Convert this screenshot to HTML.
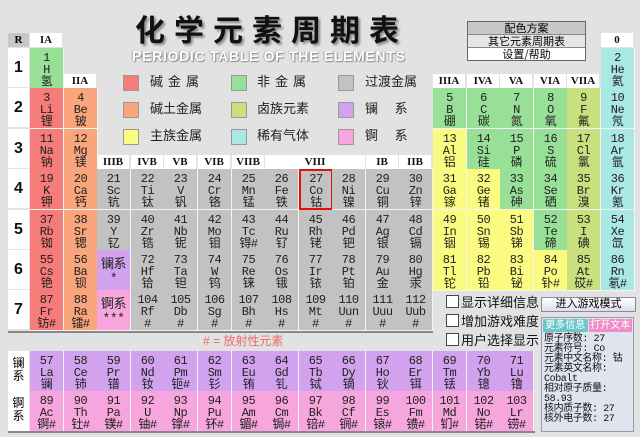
<!DOCTYPE html><html><head><meta charset="utf-8"><style>
body{margin:0;width:640px;height:437px;background:#e2e2e2;position:relative;overflow:hidden;font-family:"Liberation Sans","Noto Sans CJK SC",sans-serif}
i{font-style:normal;position:absolute;box-sizing:border-box;width:34px;height:41px;border-right:1px solid #f4f4f4;border-bottom:1px solid #f4f4f4;text-align:center;font-family:"Liberation Mono","Noto Sans CJK SC",monospace;font-size:12px;line-height:12px;padding-top:4px;color:#222;white-space:nowrap;letter-spacing:-.5px}
.a{background:#f57c78}.b{background:#f9a67c}.t{background:#c2c2c2}.m{background:#fbfb82}.n{background:#98e098}.h{background:#c8e07e}.g{background:#aae8e6}.l{background:#d2a2ee}.c{background:#f6a6dc}
.r1{top:48px}.r2{top:88px}.r3{top:129px}.r4{top:169px}.r5{top:210px}.r6{top:250px}.r7{top:290px}.rl{top:351px}.ra{top:391px}
.k1{left:30px}.k2{left:64px}.k3{left:97px}.k4{left:131px}.k5{left:164px}.k6{left:198px}.k7{left:232px}.k8{left:265px}.k9{left:299px}.k10{left:332px}.k11{left:366px}.k12{left:399px}.k13{left:433px}.k14{left:467px}.k15{left:500px}.k16{left:534px}.k17{left:567px}.k18{left:601px}
.gh{position:absolute;height:14px;background:#fff;text-align:center;font-family:"Liberation Serif",serif;font-weight:bold;font-size:11px;line-height:14px;color:#111;width:32px}
.rn{position:absolute;left:8px;width:21px;height:39px;background:#fff;font-weight:bold;font-size:16px;text-align:center;line-height:39px;color:#111}
.sw{position:absolute;width:14px;height:14px;border:1px solid #999}
.lt{position:absolute;font-size:13px;color:#222;line-height:16px}
.cb{position:absolute;left:446px;font-size:13px;color:#111;line-height:16px}
.cb b{display:inline-block;width:11px;height:11px;border:1px solid #445;background:#fff;margin-right:2px;vertical-align:-1px}
</style></head><body>
<div style="position:absolute;left:135px;top:10px;font-size:30px;font-weight:bold;letter-spacing:9px;color:#111;text-shadow:2px 2px 2px #888;font-family:'Noto Sans CJK SC',sans-serif;line-height:36px">化学元素周期表</div>
<div style="position:absolute;left:132px;top:48px;font-size:14px;font-weight:bold;color:#fff;text-shadow:1px 1px 1px #888,-1px 0 1px #aaa;letter-spacing:0.7px;line-height:16px">PERIODIC TABLE OF THE ELEMENTS</div>
<div style="position:absolute;left:467px;top:21px;width:117px;border:1px solid #666;font-size:11px;text-align:center;line-height:12px;font-family:'Noto Sans CJK SC',sans-serif">
<div style="background:#c8c8c8;border-bottom:1px solid #888">配色方案</div><div style="background:#e6e6e6;border-bottom:1px solid #888">其它元素周期表</div><div style="background:#fff">设置/帮助</div></div>
<div style="position:absolute;left:8px;top:33px;width:21px;height:14px;background:#c8c8c8;font-family:'Liberation Serif';font-weight:bold;font-size:11px;text-align:center;line-height:14px">R</div>
<div class="rn" style="top:48px">1</div><div class="rn" style="top:88px">2</div><div class="rn" style="top:129px">3</div><div class="rn" style="top:169px">4</div><div class="rn" style="top:210px">5</div><div class="rn" style="top:250px">6</div><div class="rn" style="top:290px">7</div>
<div class="gh" style="left:30px;top:33px">IA</div><div class="gh" style="left:64px;top:74px">IIA</div>
<div class="gh" style="left:97px;top:155px">IIIB</div><div class="gh" style="left:131px;top:155px">IVB</div><div class="gh" style="left:164px;top:155px">VB</div><div class="gh" style="left:198px;top:155px">VIB</div><div class="gh" style="left:232px;top:155px">VIIB</div><div class="gh" style="left:265px;top:155px;width:100px">VIII</div><div class="gh" style="left:366px;top:155px">IB</div><div class="gh" style="left:399px;top:155px">IIB</div>
<div class="gh" style="left:433px;top:74px">IIIA</div><div class="gh" style="left:467px;top:74px">IVA</div><div class="gh" style="left:500px;top:74px">VA</div><div class="gh" style="left:534px;top:74px">VIA</div><div class="gh" style="left:567px;top:74px">VIIA</div><div class="gh" style="left:601px;top:33px">0</div>
<div class="sw a" style="left:123px;top:75px"></div><div class="lt" style="left:150px;top:74px;letter-spacing:5px">碱金属</div>
<div class="sw b" style="left:123px;top:102px"></div><div class="lt" style="left:150px;top:101px">碱土金属</div>
<div class="sw m" style="left:123px;top:129px"></div><div class="lt" style="left:150px;top:128px">主族金属</div>
<div class="sw n" style="left:231px;top:75px"></div><div class="lt" style="left:257px;top:74px;letter-spacing:5px">非金属</div>
<div class="sw h" style="left:231px;top:102px"></div><div class="lt" style="left:257px;top:101px">卤族元素</div>
<div class="sw g" style="left:231px;top:129px"></div><div class="lt" style="left:257px;top:128px">稀有气体</div>
<div class="sw t" style="left:338px;top:75px"></div><div class="lt" style="left:365px;top:74px">过渡金属</div>
<div class="sw l" style="left:338px;top:102px"></div><div class="lt" style="left:365px;top:101px">镧&emsp;&nbsp;系</div>
<div class="sw c" style="left:338px;top:129px"></div><div class="lt" style="left:365px;top:128px">锕&emsp;&nbsp;系</div>

<i class="n r1 k1">1<br>H<br>氢</i><i class="g r1 k18">2<br>He<br>氦</i>
<i class="a r2 k1">3<br>Li<br>锂</i><i class="b r2 k2">4<br>Be<br>铍</i><i class="n r2 k13">5<br>B<br>硼</i><i class="n r2 k14">6<br>C<br>碳</i><i class="n r2 k15">7<br>N<br>氮</i><i class="n r2 k16">8<br>O<br>氧</i><i class="h r2 k17">9<br>F<br>氟</i><i class="g r2 k18">10<br>Ne<br>氖</i>
<i class="a r3 k1">11<br>Na<br>钠</i><i class="b r3 k2">12<br>Mg<br>镁</i><i class="m r3 k13">13<br>Al<br>铝</i><i class="n r3 k14">14<br>Si<br>硅</i><i class="n r3 k15">15<br>P<br>磷</i><i class="n r3 k16">16<br>S<br>硫</i><i class="h r3 k17">17<br>Cl<br>氯</i><i class="g r3 k18">18<br>Ar<br>氩</i>
<i class="a r4 k1">19<br>K<br>钾</i><i class="b r4 k2">20<br>Ca<br>钙</i><i class="t r4 k3">21<br>Sc<br>钪</i><i class="t r4 k4">22<br>Ti<br>钛</i><i class="t r4 k5">23<br>V<br>钒</i><i class="t r4 k6">24<br>Cr<br>铬</i><i class="t r4 k7">25<br>Mn<br>锰</i><i class="t r4 k8">26<br>Fe<br>铁</i><i class="t r4 k9" style="border:2px solid #e01010;padding-top:2px">27<br>Co<br>钴</i><i class="t r4 k10">28<br>Ni<br>镍</i><i class="t r4 k11">29<br>Cu<br>铜</i><i class="t r4 k12">30<br>Zn<br>锌</i><i class="m r4 k13">31<br>Ga<br>镓</i><i class="m r4 k14">32<br>Ge<br>锗</i><i class="n r4 k15">33<br>As<br>砷</i><i class="n r4 k16">34<br>Se<br>硒</i><i class="h r4 k17">35<br>Br<br>溴</i><i class="g r4 k18">36<br>Kr<br>氪</i>
<i class="a r5 k1">37<br>Rb<br>铷</i><i class="b r5 k2">38<br>Sr<br>锶</i><i class="t r5 k3">39<br>Y<br>钇</i><i class="t r5 k4">40<br>Zr<br>锆</i><i class="t r5 k5">41<br>Nb<br>铌</i><i class="t r5 k6">42<br>Mo<br>钼</i><i class="t r5 k7">43<br>Tc<br>锝#</i><i class="t r5 k8">44<br>Ru<br>钌</i><i class="t r5 k9">45<br>Rh<br>铑</i><i class="t r5 k10">46<br>Pd<br>钯</i><i class="t r5 k11">47<br>Ag<br>银</i><i class="t r5 k12">48<br>Cd<br>镉</i><i class="m r5 k13">49<br>In<br>铟</i><i class="m r5 k14">50<br>Sn<br>锡</i><i class="m r5 k15">51<br>Sb<br>锑</i><i class="n r5 k16">52<br>Te<br>碲</i><i class="h r5 k17">53<br>I<br>碘</i><i class="g r5 k18">54<br>Xe<br>氙</i>
<i class="a r6 k1">55<br>Cs<br>铯</i><i class="b r6 k2">56<br>Ba<br>钡</i><i class="l r6 k3" style="padding-top:8px;font-size:13px;line-height:14px">镧系<br>*</i><i class="t r6 k4">72<br>Hf<br>铪</i><i class="t r6 k5">73<br>Ta<br>钽</i><i class="t r6 k6">74<br>W<br>钨</i><i class="t r6 k7">75<br>Re<br>铼</i><i class="t r6 k8">76<br>Os<br>锇</i><i class="t r6 k9">77<br>Ir<br>铱</i><i class="t r6 k10">78<br>Pt<br>铂</i><i class="t r6 k11">79<br>Au<br>金</i><i class="t r6 k12">80<br>Hg<br>汞</i><i class="m r6 k13">81<br>Tl<br>铊</i><i class="m r6 k14">82<br>Pb<br>铅</i><i class="m r6 k15">83<br>Bi<br>铋</i><i class="m r6 k16">84<br>Po<br>钋#</i><i class="h r6 k17">85<br>At<br>砹#</i><i class="g r6 k18">86<br>Rn<br>氡#</i>
<i class="a r7 k1">87<br>Fr<br>钫#</i><i class="b r7 k2">88<br>Ra<br>镭#</i><i class="c r7 k3" style="padding-top:8px;font-size:13px;line-height:14px">锕系<br>***</i><i class="t r7 k4">104<br>Rf<br>#</i><i class="t r7 k5">105<br>Db<br>#</i><i class="t r7 k6">106<br>Sg<br>#</i><i class="t r7 k7">107<br>Bh<br>#</i><i class="t r7 k8">108<br>Hs<br>#</i><i class="t r7 k9">109<br>Mt<br>#</i><i class="t r7 k10">110<br>Uun<br>#</i><i class="t r7 k11">111<br>Uuu<br>#</i><i class="t r7 k12">112<br>Uub<br>#</i>
<div style="position:absolute;left:8px;top:331px;width:425px;height:2px;background:#888"></div>
<div style="position:absolute;left:203px;top:334px;font-size:12px;color:#f06a6a;line-height:14px">#&nbsp;=&nbsp;放射性元素</div>
<div style="position:absolute;left:8px;top:351px;width:21px;height:40px;background:#fff;font-size:12px;line-height:13px;text-align:center;padding-top:6px;box-sizing:border-box">镧<br>系</div>
<div style="position:absolute;left:8px;top:391px;width:21px;height:40px;background:#fff;font-size:12px;line-height:13px;text-align:center;padding-top:6px;box-sizing:border-box">锕<br>系</div>
<i class="l rl k1">57<br>La<br>镧</i><i class="l rl k2">58<br>Ce<br>铈</i><i class="l rl k3">59<br>Pr<br>镨</i><i class="l rl k4">60<br>Nd<br>钕</i><i class="l rl k5">61<br>Pm<br>钷#</i><i class="l rl k6">62<br>Sm<br>钐</i><i class="l rl k7">63<br>Eu<br>铕</i><i class="l rl k8">64<br>Gd<br>钆</i><i class="l rl k9">65<br>Tb<br>铽</i><i class="l rl k10">66<br>Dy<br>镝</i><i class="l rl k11">67<br>Ho<br>钬</i><i class="l rl k12">68<br>Er<br>铒</i><i class="l rl k13">69<br>Tm<br>铥</i><i class="l rl k14">70<br>Yb<br>镱</i><i class="l rl k15">71<br>Lu<br>镥</i>
<i class="c ra k1">89<br>Ac<br>锕#</i><i class="c ra k2">90<br>Th<br>钍#</i><i class="c ra k3">91<br>Pa<br>镤#</i><i class="c ra k4">92<br>U<br>铀#</i><i class="c ra k5">93<br>Np<br>镎#</i><i class="c ra k6">94<br>Pu<br>钚#</i><i class="c ra k7">95<br>Am<br>镅#</i><i class="c ra k8">96<br>Cm<br>锔#</i><i class="c ra k9">97<br>Bk<br>锫#</i><i class="c ra k10">98<br>Cf<br>锎#</i><i class="c ra k11">99<br>Es<br>锿#</i><i class="c ra k12">100<br>Fm<br>镄#</i><i class="c ra k13">101<br>Md<br>钔#</i><i class="c ra k14">102<br>No<br>锘#</i><i class="c ra k15">103<br>Lr<br>铹#</i>
<div style="position:absolute;left:8px;top:431px;width:527px;height:2px;background:#888"></div>
<div class="cb" style="top:295px"><b></b>显示详细信息</div>
<div class="cb" style="top:314px"><b></b>增加游戏难度</div>
<div class="cb" style="top:333px"><b></b>用户选择显示</div>
<div style="position:absolute;left:541px;top:297px;width:93px;height:13px;border:1px solid #889;background:linear-gradient(#fff,#dde);font-size:11px;text-align:center;line-height:13px">进入游戏模式</div>
<div style="position:absolute;left:541px;top:317px;width:93px;height:115px;border:1px solid #99a;background:#dfe4ee;box-sizing:border-box;font-size:10px;line-height:10px;color:#111;overflow:hidden">
<div style="display:flex;font-size:10px;line-height:13px;color:#fff;margin:1px;white-space:nowrap"><span style="background:#6cc6c8;width:45px;text-align:center">更多信息</span><span style="background:#f08cc8;width:44px;text-align:center;margin-left:1px">打开文本</span></div>
<div style="padding:2px 0 0 2px;font-family:'Liberation Mono','Noto Sans CJK SC',monospace;letter-spacing:-.4px;white-space:nowrap">原子序数: 27<br>元素符号: Co<br>元素中文名称: 钴<br>元素英文名称:<br>Cobalt<br>相对原子质量:<br>58.93<br>核内质子数: 27<br>核外电子数: 27</div></div>
</body></html>
